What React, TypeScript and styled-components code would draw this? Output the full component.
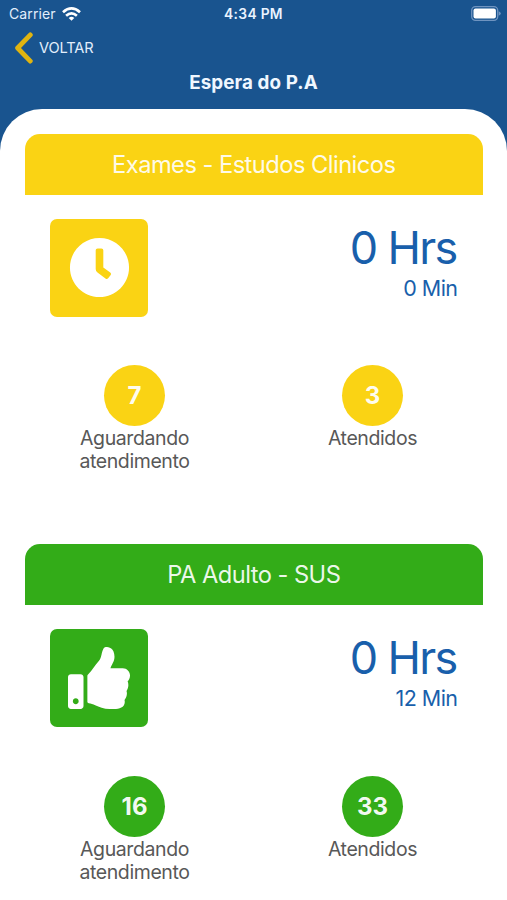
import React from "react";
import styled, { createGlobalStyle } from "styled-components";
import { FaClock, FaThumbsUp } from "react-icons/fa";

const BLUE = "#19548f";
const TEXT_BLUE = "#195fab";
const YELLOW = "#fad314";
const GREEN = "#33ac18";

const GlobalStyle = createGlobalStyle`
  * { box-sizing: border-box; }
  body {
    margin: 0;
    background: #fff;
    font-family: Inter, "Liberation Sans", sans-serif;
  }
`;

const Screen = styled.div`
  width: 507px;
  height: 900px;
  overflow: hidden;
  background: linear-gradient(${BLUE} 160px, #fff 160px);
`;

const StatusBar = styled.div`
  height: 27px;
  padding: 0 9px;
  display: grid;
  grid-template-columns: 1fr auto 1fr;
  align-items: center;
  color: #fff;
`;

const Carrier = styled.div`
  display: flex;
  align-items: center;
  gap: 6px;
  font-size: 14px;
  letter-spacing: 0.1px;
  color: #e2eefc;
`;

const Clock = styled.div`
  font-size: 13.8px;
  font-weight: 600;
  letter-spacing: 0.3px;
  color: #e9f3ff;
`;

const BatterySlot = styled.div`
  display: flex;
  justify-content: flex-end;
  margin-right: -3px;
`;

const BackButton = styled.button`
  display: flex;
  align-items: center;
  gap: 6px;
  height: 42px;
  padding: 0 0 0 14px;
  border: 0;
  background: none;
  color: #e2eefc;
  font: 400 14.6px Inter, sans-serif;
  letter-spacing: -0.1px;
`;

const PageTitle = styled.h1`
  margin: 0;
  height: 39.5px;
  line-height: 27px;
  text-align: center;
  color: #eff7ff;
  font-size: 18.8px;
  font-weight: 650;
  letter-spacing: 0.1px;
`;

const Panel = styled.main`
  height: 800px;
  padding: 25px 24.5px 0 25px;
  border-radius: 42px 42px 0 0;
  background: #fff;
`;

const Card = styled.section`
  height: 410.4px;
`;

const CardHeader = styled.h2<{ $color: string }>`
  display: flex;
  align-items: center;
  justify-content: center;
  height: 61px;
  margin: 0;
  border-radius: 15px 15px 0 0;
  background: ${(p) => p.$color};
  color: rgba(255, 255, 255, 0.92);
  font-size: 23.7px;
  font-weight: 400;
  letter-spacing: -0.54px;
`;

const Summary = styled.div`
  display: flex;
  justify-content: space-between;
  padding: 24px 24px 0 25px;
`;

const IconTile = styled.div<{ $color: string }>`
  display: grid;
  place-items: center;
  width: 98px;
  height: 98px;
  border-radius: 7px;
  background: ${(p) => p.$color};
  color: #fff;
`;

const Wait = styled.div`
  display: flex;
  flex-direction: column;
  align-items: flex-end;
  color: ${TEXT_BLUE};
`;

const Hours = styled.div`
  padding-right: 2px;
  line-height: 57px;
  font-size: 45px;
  font-weight: 400;
  letter-spacing: -1.7px;
`;

const Minutes = styled.div`
  padding-right: 1px;
  line-height: 24px;
  font-size: 21.5px;
  letter-spacing: -0.55px;
`;

const Counters = styled.div`
  display: grid;
  grid-template-columns: 219px 220px;
  column-gap: 18.5px;
  padding-top: 48.7px;
`;

const Counter = styled.div`
  display: flex;
  flex-direction: column;
  align-items: center;
`;

const Bubble = styled.div<{ $color: string }>`
  display: grid;
  place-items: center;
  width: 61px;
  height: 61px;
  border-radius: 50%;
  background: ${(p) => p.$color};
  color: rgba(255, 255, 255, 0.96);
  font-size: 24px;
  font-weight: 700;
`;

const Label = styled.div`
  width: 120px;
  padding-top: 1px;
  text-align: center;
  color: #585858;
  font-size: 19.5px;
  line-height: 23px;
  letter-spacing: -0.4px;
`;

const WifiIcon = () => (
  <svg width="19" height="14" viewBox="0 0 19 14" fill="none" stroke="#fff" strokeWidth="2.7">
    <path d="M1 5.2Q9.500 -2.300 18 5.200" />
    <path d="M4.100 8.700Q9.500 4 14.900 8.700" />
    <path d="M6.700 10.900Q9.500 8.600 12.300 10.900L9.500 13.800Z" fill="#fff" stroke="none" />
  </svg>
);

const BatteryIcon = () => (
  <svg width="30" height="15" viewBox="0 0 30 15">
    <rect x="0.700" y="0.700" width="26" height="13.600" rx="3.800" fill="none" stroke="#6f94c0" strokeWidth="1.300" />
    <rect x="2.500" y="2.500" width="22.400" height="10" rx="2" fill="#fff" />
    <path d="M27.700 5.200Q29.800 6 29.800 7.500Q29.800 9 27.700 9.800Z" fill="#6f94c0" />
  </svg>
);

const BackIcon = () => (
  <svg width="19" height="32" viewBox="0 0 19 32" fill="none" stroke="#e0b411" strokeWidth="4.800">
    <path d="M16.300 2.900L3.600 16L16.300 29.100" strokeLinecap="round" strokeLinejoin="round" />
  </svg>
);

type Queue = {
  name: string;
  color: string;
  icon: React.ReactNode;
  hours: number;
  minutes: number;
  waiting: number;
  attended: number;
};

const queues: Queue[] = [
  { name: "Exames - Estudos Clinicos", color: YELLOW, icon: <FaClock size={61} />, hours: 0, minutes: 0, waiting: 7, attended: 3 },
  { name: "PA Adulto - SUS", color: GREEN, icon: <FaThumbsUp size={62} />, hours: 0, minutes: 12, waiting: 16, attended: 33 },
];

const QueueCard = ({ queue }: { queue: Queue }) => (
  <Card>
    <CardHeader $color={queue.color}>{queue.name}</CardHeader>
    <Summary>
      <IconTile $color={queue.color}>{queue.icon}</IconTile>
      <Wait>
        <Hours>{queue.hours} Hrs</Hours>
        <Minutes>{queue.minutes} Min</Minutes>
      </Wait>
    </Summary>
    <Counters>
      <Counter>
        <Bubble $color={queue.color}>{queue.waiting}</Bubble>
        <Label>Aguardando atendimento</Label>
      </Counter>
      <Counter>
        <Bubble $color={queue.color}>{queue.attended}</Bubble>
        <Label>Atendidos</Label>
      </Counter>
    </Counters>
  </Card>
);

export default function App() {
  return (
    <>
      <GlobalStyle />
      <Screen>
        <StatusBar>
          <Carrier>
            Carrier
            <WifiIcon />
          </Carrier>
          <Clock>4:34 PM</Clock>
          <BatterySlot>
            <BatteryIcon />
          </BatterySlot>
        </StatusBar>
        <BackButton>
          <BackIcon />
          VOLTAR
        </BackButton>
        <PageTitle>Espera do P.A</PageTitle>
        <Panel>
          {queues.map((q) => (
            <QueueCard key={q.name} queue={q} />
          ))}
        </Panel>
      </Screen>
    </>
  );
}
